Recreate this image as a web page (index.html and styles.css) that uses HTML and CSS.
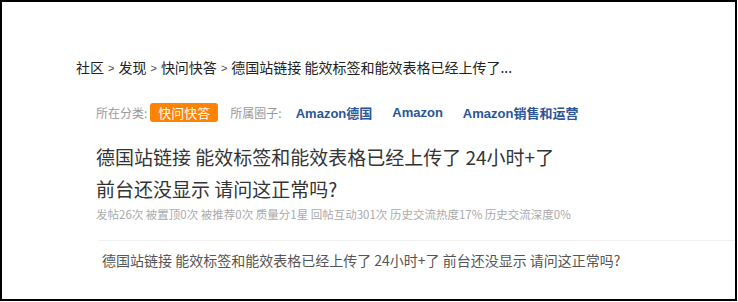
FILE: index.html
```html
<!DOCTYPE html>
<html lang="zh-CN">
<head>
<meta charset="utf-8">
<link rel="stylesheet" href="styles.css">
</head>
<body>
<div class="frame">
  <nav class="crumbs">
    <span>社区</span><span class="sep">&gt;</span><span>发现</span><span class="sep">&gt;</span><span>快问快答</span><span class="sep">&gt;</span><span>德国站链接 能效标签和能效表格已经上传了...</span>
  </nav>
  <div class="meta">
    <span class="label">所在分类:</span>
    <span class="tag">快问快答</span>
    <span class="label second">所属圈子:</span>
    <span class="circle">Amazon德国</span>
    <span class="circle">Amazon</span>
    <span class="circle">Amazon销售和运营</span>
  </div>
  <h1 class="title">德国站链接 能效标签和能效表格已经上传了 24小时+了<br>前台还没显示 请问这正常吗?</h1>
  <div class="stats">发帖26次 被置顶0次 被推荐0次 质量分1星 回帖互动301次 历史交流热度17% 历史交流深度0%</div>
  <div class="divider"></div>
  <p class="body">德国站链接 能效标签和能效表格已经上传了 24小时+了 前台还没显示 请问这正常吗?</p>
</div>
</body>
</html>
```

FILE: styles.css
```css
html, body {
  margin: 0;
  padding: 0;
  background: #fff;
}
.frame {
  box-sizing: border-box;
  width: 737px;
  height: 301px;
  border: 2px solid #000;
  font-family: "Noto Sans CJK SC", "Liberation Sans", sans-serif;
  color: #333;
  overflow: hidden;
}
.crumbs {
  margin: 53px 0 0 74px;
  font-size: 14px;
  line-height: 20px;
  color: #222;
  display: flex;
  align-items: center;
}
.sep {
  font-family: "Liberation Sans", sans-serif;
  font-size: 11px;
  margin: 3px 4px 0;
  color: #444;
}
.meta {
  margin: 24px 0 0 94px;
  display: flex;
  align-items: center;
  height: 20px;
  font-size: 12px;
}
.label {
  color: #999;
  margin-right: 3px;
}
.label.second {
  margin-left: 12px;
  margin-right: 14px;
}
.tag {
  background: #ff8200;
  color: #fff;
  font-size: 13px;
  line-height: 19px;
  padding: 0 8px;
  border-radius: 3px;
}
.circle {
  font-family: "Liberation Sans", "Noto Sans CJK SC", sans-serif;
  font-weight: bold;
  font-size: 13px;
  color: #2a5597;
  margin-right: 20px;
}
.title {
  margin: 19px 0 0 94px;
  font-size: 19px;
  font-weight: normal;
  line-height: 32px;
  color: #333;
}
.stats {
  margin: 0 0 0 94px;
  font-size: 11.5px;
  line-height: 18px;
  color: #aaa;
}
.divider {
  margin: 17px 0 0 97px;
  border-top: 1px solid #f0f0f0;
}
.body {
  margin: 9px 0 0 100px;
  font-size: 14px;
  line-height: 20px;
  color: #555;
}
```
